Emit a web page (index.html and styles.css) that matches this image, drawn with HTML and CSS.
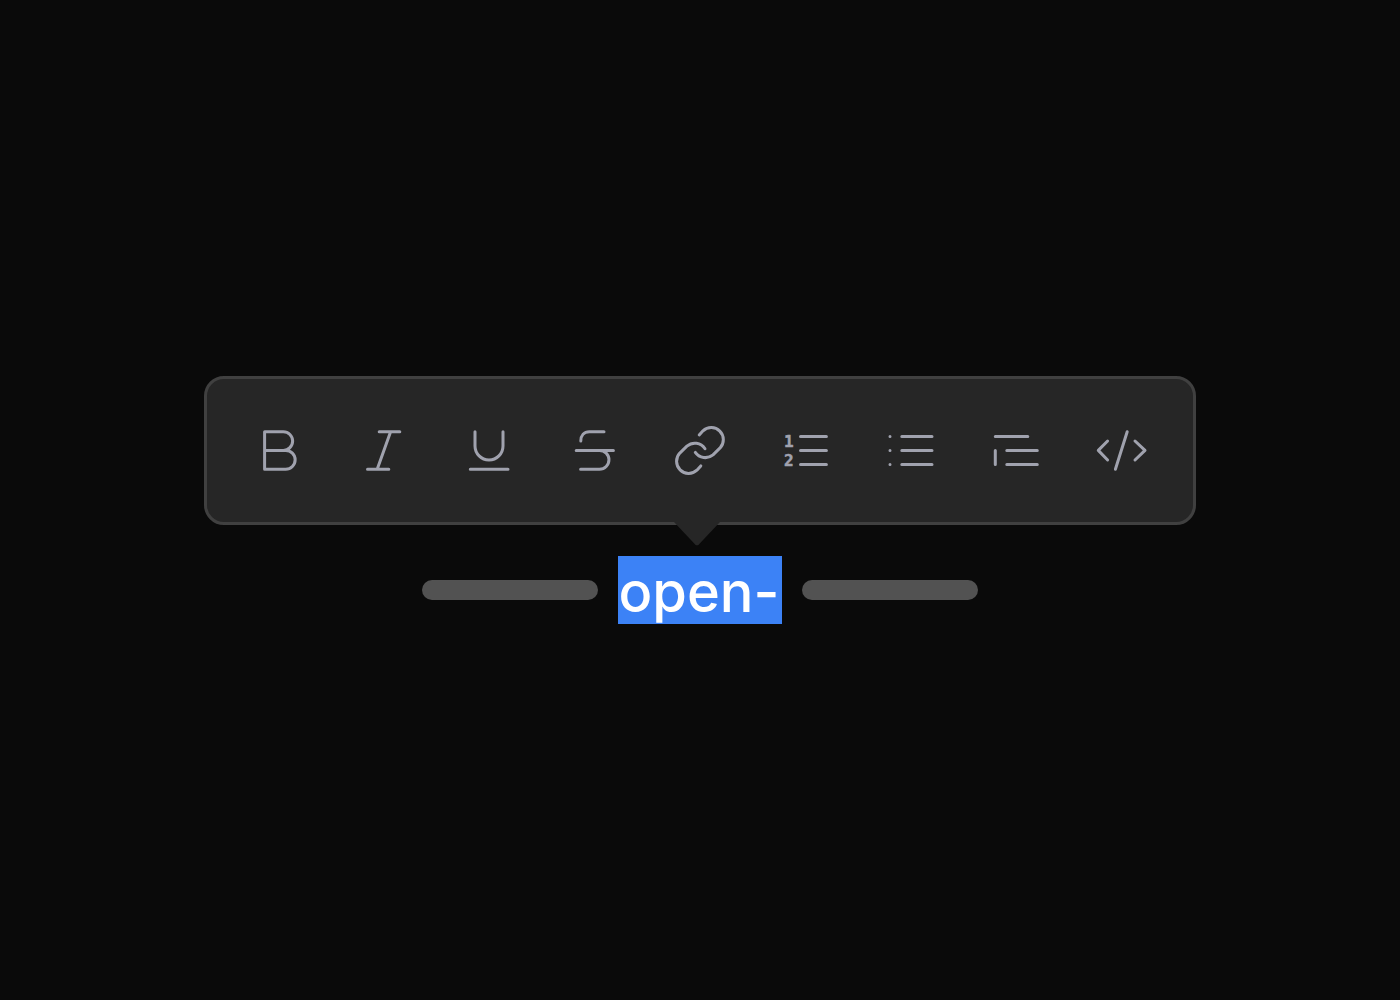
FILE: index.html
```html
<!DOCTYPE html>
<html lang="en">
<head>
<meta charset="utf-8">
<meta name="viewport" content="width=device-width, initial-scale=1">
<title>Formatting toolbar</title>
<link rel="stylesheet" href="styles.css">
</head>
<body>
<main class="editor">
  <div class="toolbar" role="toolbar" aria-label="Text formatting">
    <button class="tool" type="button" aria-label="Bold"><svg class="icon" viewBox="0 0 56 56"><path d="M13.6 9.7H32.3a9.35 9.35 0 0 1 0 18.7H13.6M32.3 28.4H34.7a9.45 9.45 0 0 1 0 18.9H13.6V9.7"/></svg></button>
    <button class="tool" type="button" aria-label="Italic"><svg class="icon" viewBox="0 0 56 56"><path d="M23.2 9.7h20.6M11.5 47.3h21.3M34.6 9.7 21.2 47.3"/></svg></button>
    <button class="tool" type="button" aria-label="Underline"><svg class="icon" viewBox="0 0 56 56"><path d="M14 9.7V24a14 14 0 0 0 28 0V9.7M9.3 47.3H47"/></svg></button>
    <button class="tool" type="button" aria-label="Strikethrough"><svg class="icon" viewBox="0 0 56 56"><path d="M37 9.7H22.3c-5.2 0-8.5 3.7-8.5 9.3M9.2 28.4h37.2M32.5 28.4a9.45 9.45 0 0 1 0 18.9H13.6"/></svg></button>
    <button class="tool" type="button" aria-label="Link"><svg class="icon" viewBox="0 0 56 56"><path d="M27.2 13 31 8.8A12.1 12.1 0 0 1 48.1 25.9L41 32.8A12.1 12.1 0 0 1 23.3 30.4M28.8 43.9 24.9 48.2A12.1 12.1 0 0 1 7.8 31.1L14.9 24.2A12.1 12.1 0 0 1 33 26.7"/></svg></button>
    <button class="tool" type="button" aria-label="Numbered list"><svg class="icon" viewBox="0 0 56 56"><path d="M23.5 14.4h25.9M23.5 28.4h25.9M23.5 42.4h25.9"/><text class="digit" x="7" y="25">1</text><text class="digit" x="7" y="44">2</text></svg></button>
    <button class="tool" type="button" aria-label="Bulleted list"><svg class="icon" viewBox="0 0 56 56"><path d="M18.8 14.4H49M18.8 28.4H49M18.8 42.4H49M7 14.4h.01M7 28.4h.01M7 42.4h.01"/></svg></button>
    <button class="tool" type="button" aria-label="Block quote"><svg class="icon" viewBox="0 0 56 56"><path d="M7.3 14.4h32.5M7.3 28.4V42.4M18.8 28.4h30.5M18.8 42.4h30.5"/></svg></button>
    <button class="tool" type="button" aria-label="Code"><svg class="icon" viewBox="0 0 56 56"><path d="m14.6 19-9.3 9.4 9.3 9.6M34.2 9.7 22.4 47.2M42 19l10 9.4L42 38"/></svg></button>
  </div>
  <div class="line">
    <span class="bar"></span>
    <span class="selection">open-</span>
    <span class="bar"></span>
  </div>
</main>
</body>
</html>
```
FILE: styles.css
```css
* {
  box-sizing: border-box;
}

body {
  margin: 0;
  background: #0a0a0a;
  font-family: Inter, "Liberation Sans", sans-serif;
}

.editor {
  min-height: 100vh;
  padding: 24px;
  display: flex;
  flex-direction: column;
  align-items: center;
  justify-content: center;
  gap: 31px;
}

.toolbar {
  position: relative;
  display: flex;
  width: 100%;
  max-width: 992px;
  padding: 43px 19px 44px;
  border: 3px solid #404040;
  border-radius: 20px;
  background: #262626;
}

/* Pointer that joins the toolbar to the selected word */
.toolbar::after {
  content: "";
  position: absolute;
  top: 100%;
  left: 50%;
  width: 46px;
  height: 24px;
  margin-left: -26px;
  background: #262626;
  clip-path: polygon(0 0, 100% 0, 54% 94%, 50% 98%, 46% 94%);
}

.tool {
  flex: 1;
  min-width: 0;
  padding: 0;
  border: 0;
  background: none;
  color: #a0a2ae;
  display: flex;
  justify-content: center;
  cursor: pointer;
}

.icon {
  width: 56px;
  height: 56px;
  fill: none;
  stroke: currentColor;
  stroke-width: 3;
  stroke-linecap: round;
  stroke-linejoin: round;
}

.digit {
  fill: currentColor;
  stroke-width: 0.5;
  font: bold 16px "DejaVu Sans Mono", monospace;
}

.line {
  display: flex;
  align-items: center;
  gap: 20px;
}

.bar {
  width: 176px;
  height: 20px;
  border-radius: 10px;
  background: #525252;
}

.selection {
  padding: 4px 3px 0 1px;
  background: #3c82f6;
  color: #fff;
  font-size: 56px;
  font-weight: 500;
  line-height: 64px;
}
```
